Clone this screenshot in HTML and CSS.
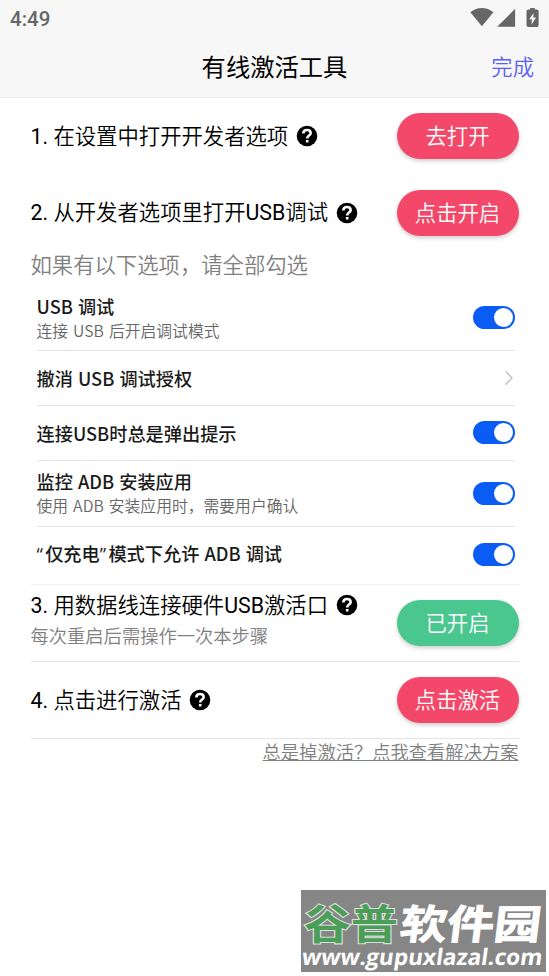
FILE: index.html
```html
<!DOCTYPE html>
<html lang="zh-CN">
<head>
<meta charset="utf-8">
<title>有线激活工具</title>
<link rel="stylesheet" href="styles.css">
</head>
<body>
<svg class="defs" width="0" height="0" aria-hidden="true">
  <symbol id="help" viewBox="0 0 22 22">
    <circle cx="11" cy="11" r="10.3" fill="#000"/>
    <path d="M7.300 8.500C7.300 6.300 8.900 5.100 11 5.100s3.700 1.200 3.700 3.100c0 2.300-3.500 2.500-3.500 5.200" fill="none" stroke="#fff" stroke-width="2.500"/>
    <rect x="9.900" y="15" width="2.600" height="2.500" fill="#fff"/>
  </symbol>
</svg>
<header class="header">
  <div class="status">
    <span class="clock">4:49</span>
    <svg class="status-icons" width="70" height="21" viewBox="0 0 70 21" fill="#666">
      <path d="M.3 4.300C7.400-1.400 16.300-1.400 23.400 4.300L11.900 18.200z"/>
      <path d="M45.100.800V18.700H27.200z"/>
      <path fill-rule="evenodd" d="M60.200 0h4.600v1.500h2q1.800 0 1.800 1.600v14.200q0 1.700-1.800 1.700h-8.500q-1.800 0-1.800-1.700v-14.200q0-1.600 1.800-1.600h1.900zM63.600 5l-4.400 6.200h2.700l-.5 5.500 4.700-7.200h-2.900z"/>
    </svg>
  </div>
  <div class="titlebar">
    <h1 class="title">有线激活工具</h1>
    <a class="done">完成</a>
  </div>
</header>
<main class="content">
  <section class="step step-1">
    <div class="step-title"><p><span class="latin">1. </span>在设置中打开开发者选项</p><svg class="help"><use href="#help"/></svg></div>
    <button class="btn">去打开</button>
  </section>
  <section class="step step-2">
    <div class="step-title"><p><span class="latin">2. </span>从开发者选项里打开<span class="latin">USB</span>调试</p><svg class="help"><use href="#help"/></svg></div>
    <button class="btn">点击开启</button>
  </section>
  <p class="hint">如果有以下选项，请全部勾选</p>
  <ul class="options">
    <li class="option option-first">
      <div><div class="name">USB 调试</div><div class="desc">连接 USB 后开启调试模式</div></div>
      <i class="switch"></i>
    </li>
    <li class="option option-link">
      <div class="name">撤消 USB 调试授权</div>
      <svg class="chevron" width="10" height="16" viewBox="0 0 10 16"><path d="M1.500 1.300 8 8l-6.500 6.700" fill="none" stroke="#c4c4c4" stroke-width="1.500"/></svg>
    </li>
    <li class="option option-prompt">
      <div class="name">连接USB时总是弹出提示</div>
      <i class="switch"></i>
    </li>
    <li class="option option-install">
      <div><div class="name">监控 ADB 安装应用</div><div class="desc">使用 ADB 安装应用时，需要用户确认</div></div>
      <i class="switch"></i>
    </li>
    <li class="option option-charge">
      <div class="name"><span class="quote">“</span>仅充电<span class="quote">”</span>模式下允许 ADB 调试</div>
      <i class="switch"></i>
    </li>
  </ul>
  <section class="step step-3">
    <div class="step-body">
      <div class="step-title"><p><span class="latin">3. </span>用数据线连接硬件<span class="latin">USB</span>激活口</p><svg class="help"><use href="#help"/></svg></div>
      <p class="note">每次重启后需操作一次本步骤</p>
    </div>
    <button class="btn btn-on">已开启</button>
  </section>
  <section class="step step-4">
    <div class="step-title"><p><span class="latin">4. </span>点击进行激活</p><svg class="help"><use href="#help"/></svg></div>
    <button class="btn">点击激活</button>
  </section>
  <a class="solution">总是掉激活？点我查看解决方案</a>
</main>
<div class="watermark">
  <div class="brand"><span class="brand-green">谷普</span><span class="brand-white">软件园</span></div>
  <div class="site">www.gupuxlazal.com</div>
</div>
</body>
</html>
```

FILE: styles.css
```css
* { box-sizing: border-box; margin: 0; padding: 0; }
body {
  width: 549px;
  height: 976px;
  position: relative;
  overflow: hidden;
  background: #fff;
  color: #000;
  font-family: Roboto, "Noto Sans CJK SC", sans-serif;
  font-size: 21.35px;
  font-weight: 350;
}
.defs { position: absolute; }
.header { height: 98px; background: #f7f7f7; border-bottom: 1px solid #ebebeb; }
.status {
  height: 38px;
  padding: 0 9px 0 10px;
  display: flex;
  align-items: center;
  justify-content: space-between;
}
.clock { font-size: 20.5px; font-weight: 500; line-height: 38px; color: #666; }
.status-icons { margin-top: -2px; }
.titlebar { height: 60px; display: grid; grid-template-columns: 1fr auto 1fr; align-items: center; padding: 0 15px; }
.title { grid-column: 2; font-size: 24.3px; font-weight: 400; line-height: 60px; }
.done { justify-self: end; color: #5a62f2; line-height: 60px; }
.content { padding: 0 30.5px; }
.step { display: flex; justify-content: space-between; align-items: center; }
.step-1 { height: 76px; }
.step-2 { height: 77px; }
.step-title { display: flex; align-items: center; gap: 7.500px; line-height: 32px; white-space: nowrap; }
.step-title p { padding-top: 1px; }
.step-1 .step-title p { padding-top: 2px; }
.latin { font-weight: 400; }
.help { width: 22px; height: 22px; flex: none; }
.btn {
  width: 122px;
  height: 46px;
  border: 0;
  border-radius: 23px;
  background: #f3486a;
  color: #fff;
  font: inherit;
  line-height: 46px;
  padding-top: 1px;
  box-shadow: 0 2px 4px rgba(0, 0, 0, .2);
}
.btn-on { background: #49c78f; }
.hint { height: 37px; line-height: 30px; color: #808080; }
.options { list-style: none; padding: 0 4px 0 6px; font-family: "Noto Sans CJK SC", sans-serif; }
.option { display: flex; justify-content: space-between; align-items: center; border-bottom: 1px solid #e5e5e5; }
.option-first { height: 63px; padding-bottom: 3px; }
.option-link { height: 55px; padding-bottom: 1px; }
.option-prompt { height: 55px; padding-bottom: 1px; }
.option-install { height: 66px; padding-bottom: 1px; }
.option-charge { height: 57px; border: 0; padding-bottom: 3px; }
.option-charge .name { padding-bottom: 2px; }
.chevron { margin-right: 1px; }
.name { font-size: 18.200px; font-weight: 500; line-height: 26px; color: #1a1a1a; white-space: nowrap; word-spacing: 1px; }
.quote { font-family: "Open Sans", sans-serif; letter-spacing: 2.300px; line-height: 1; }
.desc { font-size: 15.800px; font-weight: 350; line-height: 24px; color: #666; white-space: nowrap; word-spacing: 1.500px; }
.switch { width: 42px; height: 23px; border-radius: 12px; background: #0b5bf5; padding: 2px; display: flex; justify-content: flex-end; }
.switch::before { content: ""; width: 19px; height: 19px; border-radius: 50%; background: #fff; }
.step-3 { height: 78px; border-top: 1px solid #f0f0f0; border-bottom: 1px solid #e5e5e5; }
.step-body { height: 69px; }
.note { font-size: 18.300px; line-height: 30px; color: #808080; }
.step-4 { height: 77px; border-bottom: 1px solid #e5e5e5; }
.solution { display: block; width: max-content; margin-left: auto; font-size: 18.300px; line-height: 27px; color: #808080; text-decoration: underline; }
.watermark {
  position: absolute;
  left: 301px;
  top: 890px;
  width: 245px;
  height: 82px;
  background: #868686;
  color: #fff;
  white-space: nowrap;
}
.brand { display: flex; height: 54px; line-height: 60px; font-size: 47px; font-weight: 700; font-family: "Noto Sans CJK SC", sans-serif; padding-left: 3px; transform: translateY(2px) scaleY(.86); }
.brand-green { color: #4a9e58; -webkit-text-stroke: 2.500px #ddd; paint-order: stroke fill; }
.brand-white { transform: skewX(-6deg); -webkit-text-stroke: 1px #fff; margin-left: 3px; }
.site { font: 700 22.600px/26px "Open Sans", sans-serif; width: max-content; transform: skewX(-8deg); padding-left: 1px; }
```
